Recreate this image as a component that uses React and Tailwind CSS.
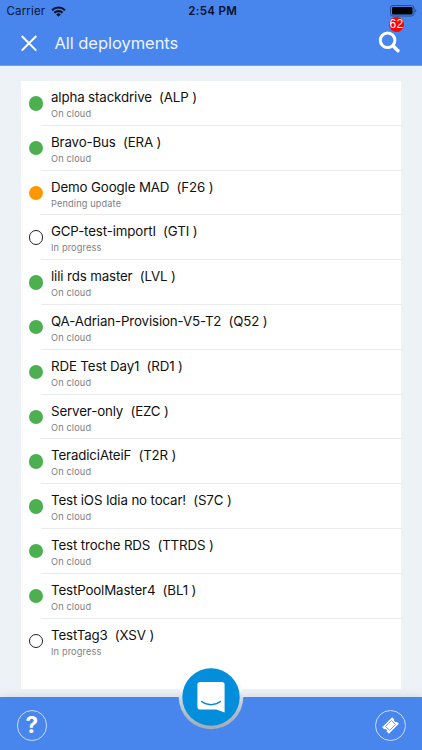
import React from 'react';

const deployments = [
  { name: 'alpha stackdrive', code: 'ALP', status: 'On cloud' },
  { name: 'Bravo-Bus', code: 'ERA', status: 'On cloud' },
  { name: 'Demo Google MAD', code: 'F26', status: 'Pending update' },
  { name: 'GCP-test-importI', code: 'GTI', status: 'In progress' },
  { name: 'lili rds master', code: 'LVL', status: 'On cloud' },
  { name: 'QA-Adrian-Provision-V5-T2', code: 'Q52', status: 'On cloud' },
  { name: 'RDE Test Day1', code: 'RD1', status: 'On cloud' },
  { name: 'Server-only', code: 'EZC', status: 'On cloud' },
  { name: 'TeradiciAteiF', code: 'T2R', status: 'On cloud' },
  { name: 'Test iOS Idia no tocar!', code: 'S7C', status: 'On cloud' },
  { name: 'Test troche RDS', code: 'TTRDS', status: 'On cloud' },
  { name: 'TestPoolMaster4', code: 'BL1', status: 'On cloud' },
  { name: 'TestTag3', code: 'XSV', status: 'In progress' },
];

const dotStyles = {
  'On cloud': 'bg-[#4caf50]',
  'Pending update': 'bg-[#ff9800]',
  'In progress': 'border-[1.5px] border-[#222]',
};

function StatusBar() {
  return (
    <div className="grid h-[22px] grid-cols-3 items-center pr-[5px] pl-[6.5px] text-[11.5px] leading-none text-[#0b1630]">
      <div className="flex items-center gap-[6px] pt-px tracking-[0.15px]">
        Carrier
        <svg className="-mt-px h-[11px] w-[15px]" viewBox="0 0 15 11" fill="none" stroke="#06102a" strokeWidth="2.1">
          <path d="M1 4.2a9.2 9.2 0 0 1 13 0" />
          <path d="M3.4 6.8a5.8 5.8 0 0 1 8.2 0" />
          <path d="M7.5 10.7 5.2 8.4a3.2 3.2 0 0 1 4.6 0z" fill="#06102a" stroke="none" />
        </svg>
      </div>
      <div className="pt-px pl-[2px] text-center font-semibold tracking-[0.3px] text-[#06102a]">2:54 PM</div>
      <svg className="h-[12px] w-[27px] justify-self-end" viewBox="0 0 27 12">
        <rect x="0.5" y="0.5" width="23.5" height="10.5" rx="2.5" fill="none" stroke="#274c8d" />
        <rect x="2" y="2" width="20.5" height="7.5" rx="1.2" fill="#000" />
        <path d="M25.2 4.1c1.5.4 1.5 2.9 0 3.3z" fill="#274c8d" />
      </svg>
    </div>
  );
}

function Header() {
  return (
    <header className="h-[66px] shrink-0 border-b border-[#759eea] bg-[#4886ed]">
      <StatusBar />
      <div className="flex h-[43px] items-center pr-[22px] pl-[21px] text-white">
        <svg className="h-4 w-4 overflow-visible" viewBox="0 0 16 16" fill="none" stroke="currentColor" strokeWidth="2">
          <path d="M.7 0 15.3 14.6M15.3 0 .7 14.6" />
        </svg>
        <h1 className="ml-[17.5px] text-[16.5px] leading-none tracking-[-0.05px] text-[#edf4ff]">All deployments</h1>
        <div className="relative ml-auto h-[22px] w-[21px]">
          <svg className="h-[22px] w-[21px] overflow-visible" viewBox="0 0 21 22" fill="none" stroke="currentColor">
            <circle cx="8.6" cy="7.3" r="7.3" strokeWidth="3" />
            <path d="m14 12.7 5 5" strokeWidth="3.4" strokeLinecap="round" />
          </svg>
          <span className="absolute -top-[16px] left-[10px] flex size-[15px] items-center justify-center rounded-full bg-[#f00] font-['Liberation_Sans'] text-[12px] leading-none tracking-[0.4px]">
            62
          </span>
        </div>
      </div>
    </header>
  );
}

function Deployment({ name, code, status, last }) {
  return (
    <li className="flex h-[44.8px] pl-[7.5px]">
      <span className={`mt-[15px] size-[14.5px] shrink-0 rounded-full ${dotStyles[status]}`} />
      <div className="flex-1">
        <div className={`-ml-[2px] h-full pt-[7px] pl-[10px] ${last ? '' : 'border-b border-[#e9eaec]'}`}>
          <p className="text-[13.3px] leading-[18px] tracking-[-0.13px] whitespace-pre text-[#111]">
            {`${name}  (${code} )`}
          </p>
          <p className="mt-px text-[9.2px] leading-[14px] tracking-[0.14px] text-[#808086]">{status}</p>
        </div>
      </div>
    </li>
  );
}

function ChatButton() {
  return (
    <button className="absolute -top-[33px] left-[177px] size-[68px]">
      <svg className="size-[68px] overflow-visible" viewBox="0 0 68 68">
        <defs>
          <linearGradient id="ring" x1="0" y1="0" x2="0" y2="1">
            <stop offset="0" stopColor="#fff" />
            <stop offset="0.38" stopColor="#f7f8fa" />
            <stop offset="0.52" stopColor="#d0d8e1" />
            <stop offset="0.75" stopColor="#b2bcc8" />
            <stop offset="1" stopColor="#a3abb5" />
          </linearGradient>
        </defs>
        <circle cx="34" cy="33" r="32.3" fill="url(#ring)" />
        <circle cx="34" cy="33" r="28.7" fill="#038edb" />
        <path
          d="M23.2 18.1h21.6a2.8 2.8 0 0 1 2.8 2.8v27.7l-8.3-3H23.2a2.8 2.8 0 0 1-2.8-2.8V20.9a2.8 2.8 0 0 1 2.8-2.8z"
          fill="#fff"
        />
        <path d="M24.7 37.5c5.6 4.2 13.1 4.2 18.7 0" fill="none" stroke="#078bd2" strokeWidth="1.5" strokeLinecap="round" />
      </svg>
    </button>
  );
}

function Footer() {
  return (
    <footer className="relative flex h-[53.5px] shrink-0 items-center justify-between bg-[#4886ed] px-[16.5px] pt-[4px] text-white shadow-[0_-2px_8px_rgba(60,80,110,0.12)]">
      <button className="flex size-[30.5px] items-center justify-center rounded-full border border-[#c9dcfa] text-[22.5px] leading-none font-bold">
        ?
      </button>
      <ChatButton />
      <button className="flex size-[30.5px] items-center justify-center rounded-full border border-[#c9dcfa]">
        <svg className="size-[17px] -rotate-45" viewBox="0 0 18 18">
          <path d="M1.5 4h15v3.1a2 2 0 0 0 0 3.8V14h-15v-3.1a2 2 0 0 0 0-3.8z" fill="#fff" />
          <rect x="4.6" y="6" width="8.8" height="6" fill="none" stroke="#4886ed" strokeWidth="0.8" />
        </svg>
      </button>
    </footer>
  );
}

export default function App() {
  return (
    <div className="flex h-[750px] w-[422px] flex-col overflow-hidden bg-[#edf2f7] font-[Inter,sans-serif]">
      <Header />
      <main className="flex-1 px-[21px] pt-[14.5px] pb-[8px]">
        <ul className="h-full bg-white pt-[0.5px]">
          {deployments.map((item, i) => (
            <Deployment key={item.code} {...item} last={i === deployments.length - 1} />
          ))}
        </ul>
      </main>
      <Footer />
    </div>
  );
}
